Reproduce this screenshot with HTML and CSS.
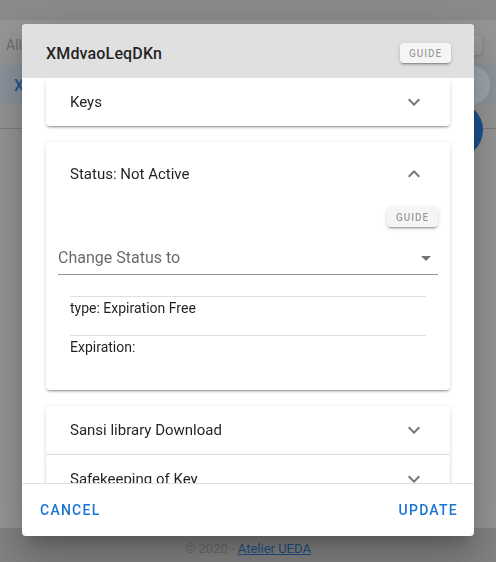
FILE: index.html
```html
<!DOCTYPE html>
<html lang="en">
<head>
<meta charset="utf-8">
<title>XMdvaoLeqDKn</title>
<link rel="stylesheet" href="styles.css">
</head>
<body>
<div class="page">
  <div class="appbar"></div>
  <div class="toolbar">
    <span class="filter">All keys</span>
    <span class="tool-btn"></span>
  </div>
  <div class="row selected">
    <span class="row-name">XMdvaoLeqDKn</span>
    <span class="avatar"></span>
  </div>
  <div class="row plain"></div>
  <div class="spacer"></div>
  <footer class="page-footer">© 2020 - <a href="#">Atelier UEDA</a></footer>
  <span class="fab"></span>
</div>

<div class="overlay">
  <div class="dialog">
    <div class="dialog-head">
      <span class="dialog-title">XMdvaoLeqDKn</span>
      <button class="guide">GUIDE</button>
    </div>
    <div class="dialog-body">
      <div class="panels">
        <div class="panel round-all">
          <div class="panel-head">
            <span>Keys</span>
            <svg class="chev" viewBox="0 0 24 24"><path d="M7.41,8.58L12,13.17L16.59,8.58L18,10L12,16L6,10L7.41,8.58Z"/></svg>
          </div>
        </div>
        <div class="panel round-all active">
          <div class="panel-head tall">
            <span>Status: Not Active</span>
            <svg class="chev" viewBox="0 0 24 24"><path d="M7.41,15.41L12,10.83L16.59,15.41L18,14L12,8L6,14L7.41,15.41Z"/></svg>
          </div>
          <div class="panel-content">
            <div class="guide-row"><button class="guide">GUIDE</button></div>
            <div class="select">
              <span class="select-label">Change Status to</span>
              <svg class="caret" viewBox="0 0 24 24"><path d="M7,10L12,15L17,10H7Z"/></svg>
            </div>
            <ul class="info-list">
              <li>type: Expiration Free</li>
              <li>Expiration:</li>
            </ul>
          </div>
        </div>
        <div class="panel round-top">
          <div class="panel-head">
            <span>Sansi library Download</span>
            <svg class="chev" viewBox="0 0 24 24"><path d="M7.41,8.58L12,13.17L16.59,8.58L18,10L12,16L6,10L7.41,8.58Z"/></svg>
          </div>
        </div>
        <div class="panel joined">
          <div class="panel-head">
            <span>Safekeeping of Key</span>
            <svg class="chev" viewBox="0 0 24 24"><path d="M7.41,8.58L12,13.17L16.59,8.58L18,10L12,16L6,10L7.41,8.58Z"/></svg>
          </div>
        </div>
      </div>
    </div>
    <div class="dialog-actions">
      <button class="text-btn">CANCEL</button>
      <button class="text-btn">UPDATE</button>
    </div>
  </div>
</div>
</body>
</html>
```

FILE: styles.css
```css
* { box-sizing: border-box; }

html, body {
  margin: 0;
  padding: 0;
  width: 496px;
  height: 562px;
  overflow: hidden;
  font-family: Roboto, "Liberation Sans", sans-serif;
}

/* ---------- page behind the dialog (already dimmed colours) ---------- */
.page {
  position: relative;
  height: 562px;
  display: flex;
  flex-direction: column;
  background: #979797;
}

.appbar {
  height: 20px;
  background: #8c8c8c;
}

.toolbar {
  height: 45px;
  display: flex;
  align-items: flex-end;
  justify-content: space-between;
  padding: 0 14px 10px 6px;
}

.filter {
  font-size: 14px;
  line-height: 20px;
  color: #6d6d6d;
}

.tool-btn {
  width: 62px;
  height: 20px;
  border-radius: 4px;
  background: #9c9c9c;
  box-shadow: 0 1px 3px rgba(0, 0, 0, 0.2);
}

.row {
  display: flex;
  align-items: center;
  justify-content: space-between;
}

.row.selected {
  height: 40px;
  background: #8e959e;
  padding: 0 6px 0 14px;
}

.row-name {
  font-size: 16px;
  font-weight: 500;
  color: #1f5597;
}

.avatar {
  width: 40px;
  height: 40px;
  border-radius: 50%;
  background: #a3a9b1;
}

.row.plain {
  height: 24px;
  border-bottom: 1px solid #7f7f7f;
}

.spacer { flex: 1; }

.page-footer {
  height: 34px;
  padding-top: 13px;
  background: #838383;
  text-align: center;
  font-size: 13px;
  line-height: 16px;
  color: #6b6b6b;
}

.page-footer a {
  color: #1d4f86;
}

.fab {
  position: absolute;
  left: 427px;
  top: 102px;
  width: 56px;
  height: 56px;
  border-radius: 50%;
  background: #1b5291;
}

/* ---------- dialog ---------- */
.overlay {
  position: fixed;
  inset: 0;
  display: flex;
  justify-content: center;
  align-items: flex-start;
  padding-top: 24px;
}

.dialog {
  width: 452px;
  height: 512px;
  display: flex;
  flex-direction: column;
  background: #fff;
  border-radius: 4px;
  overflow: hidden;
  box-shadow: 0 11px 15px -7px rgba(0, 0, 0, 0.2),
              0 24px 38px 3px rgba(0, 0, 0, 0.14),
              0 9px 46px 8px rgba(0, 0, 0, 0.12);
}

.dialog-head {
  height: 54px;
  flex: none;
  display: flex;
  align-items: center;
  justify-content: space-between;
  padding: 4px 23px 0 24px;
  background: #e0e0e0;
}

.dialog-title {
  font-size: 16px;
  font-weight: 500;
  color: rgba(0, 0, 0, 0.87);
  letter-spacing: 0.01em;
}

.guide {
  height: 20px;
  width: 51px;
  padding: 0;
  border: 0;
  border-radius: 4px;
  background: #f5f5f5;
  color: rgba(0, 0, 0, 0.38);
  font-family: Roboto, "Liberation Sans", sans-serif;
  font-size: 10px;
  font-weight: 500;
  letter-spacing: 0.09em;
  box-shadow: 0 3px 1px -2px rgba(0, 0, 0, 0.2),
              0 2px 2px 0 rgba(0, 0, 0, 0.14),
              0 1px 5px 0 rgba(0, 0, 0, 0.12);
}

.dialog-body {
  flex: 1;
  overflow: hidden;
  padding: 0 24px;
}

.panels {
  display: flex;
  flex-direction: column;
}

.panel {
  position: relative;
  background: #fff;
  box-shadow: 0 3px 1px -2px rgba(0, 0, 0, 0.2),
              0 2px 2px 0 rgba(0, 0, 0, 0.14),
              0 1px 5px 0 rgba(0, 0, 0, 0.12);
}

.round-all { border-radius: 4px; }
.round-top { border-radius: 4px 4px 0 0; }

.panel.active {
  margin: 16px 0;
}

.panel.joined {
  border-top: 1px solid rgba(0, 0, 0, 0.12);
}

.panel-head {
  height: 48px;
  display: flex;
  align-items: center;
  justify-content: space-between;
  padding: 0 24px;
  font-size: 15px;
  color: rgba(0, 0, 0, 0.87);
}

.panel-head.tall { height: 64px; }

.chev {
  width: 24px;
  height: 24px;
  fill: rgba(0, 0, 0, 0.54);
}

.panel-content {
  padding: 1px 12px 16px;
}

.guide-row {
  display: flex;
  justify-content: flex-end;
}

.select {
  margin-top: 16px;
  height: 32px;
  display: flex;
  align-items: center;
  justify-content: space-between;
  padding-bottom: 2px;
  border-bottom: 1px solid rgba(0, 0, 0, 0.42);
}

.select-label {
  font-size: 16px;
  color: rgba(0, 0, 0, 0.6);
}

.caret {
  width: 24px;
  height: 24px;
  fill: rgba(0, 0, 0, 0.54);
}

.info-list {
  list-style: none;
  margin: 21px 0 0;
  padding: 0 12px;
}

.info-list li {
  border-top: 1px solid rgba(0, 0, 0, 0.12);
  padding: 1px 0 17px;
  font-size: 14px;
  line-height: 20px;
  color: rgba(0, 0, 0, 0.87);
}

.dialog-actions {
  height: 53px;
  flex: none;
  display: flex;
  align-items: center;
  justify-content: space-between;
  padding: 0 16px 0 18px;
  border-top: 1px solid rgba(0, 0, 0, 0.12);
}

.text-btn {
  border: 0;
  background: none;
  padding: 0;
  font-family: Roboto, "Liberation Sans", sans-serif;
  font-size: 14px;
  font-weight: 500;
  letter-spacing: 0.0892857em;
  color: #1976d2;
}
```
